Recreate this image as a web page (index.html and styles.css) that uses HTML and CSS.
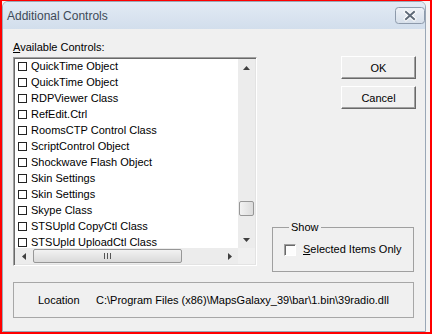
FILE: index.html
```html
<!DOCTYPE html>
<html lang="en">
<head>
    <meta charset="UTF-8">
    <meta name="viewport" content="width=device-width, initial-scale=1.0">
    <title>Additional Controls</title>
    <link rel="stylesheet" href="styles.css">
</head>
<body>
    <div class="shot">
        <div class="window">
            <div class="titlebar">
                <span class="title">Additional Controls</span>
                <span class="close">
                    <svg width="30" height="17" viewBox="0 0 30 17">
                        <defs>
                            <linearGradient id="cg" x1="0" y1="0" x2="0" y2="1">
                                <stop offset="0" stop-color="#eef2f7"/>
                                <stop offset="1" stop-color="#d6dfea"/>
                            </linearGradient>
                        </defs>
                        <rect x="0.5" y="0.5" width="29" height="16" rx="3" fill="url(#cg)" stroke="#8d9aab"/>
                        <path d="M11 5 L19 12 M19 5 L11 12" stroke="#ffffff" stroke-width="4" stroke-linecap="square"/>
                        <path d="M11 5 L19 12 M19 5 L11 12" stroke="#5f6b79" stroke-width="2" stroke-linecap="square"/>
                    </svg>
                </span>
            </div>
            <div class="client">
                <div class="top">
                    <div class="left">
                        <div class="label"><u>A</u>vailable Controls:</div>
                        <div class="listbox">
                            <div class="list-main">
                                <ul class="items">
                                    <li><span class="cb"></span>QuickTime Object</li>
                                    <li><span class="cb"></span>QuickTime Object</li>
                                    <li><span class="cb"></span>RDPViewer Class</li>
                                    <li><span class="cb"></span>RefEdit.Ctrl</li>
                                    <li><span class="cb"></span>RoomsCTP Control Class</li>
                                    <li><span class="cb"></span>ScriptControl Object</li>
                                    <li><span class="cb"></span>Shockwave Flash Object</li>
                                    <li><span class="cb"></span>Skin Settings</li>
                                    <li><span class="cb"></span>Skin Settings</li>
                                    <li><span class="cb"></span>Skype Class</li>
                                    <li><span class="cb"></span>STSUpld CopyCtl Class</li>
                                    <li><span class="cb"></span>STSUpld UploadCtl Class</li>
                                </ul>
                                <div class="vscroll">
                                    <div class="arrow">
                                        <svg width="7" height="4" viewBox="0 0 7 4"><path d="M0 4 L3.5 0 L7 4 Z" fill="#3f3f3f"/></svg>
                                    </div>
                                    <div class="vtrack"><div class="vthumb"></div></div>
                                    <div class="arrow">
                                        <svg width="7" height="4" viewBox="0 0 7 4"><path d="M0 0 L3.5 4 L7 0 Z" fill="#3f3f3f"/></svg>
                                    </div>
                                </div>
                            </div>
                            <div class="hrow">
                                <div class="hscroll">
                                    <div class="arrow">
                                        <svg width="4" height="7" viewBox="0 0 4 7"><path d="M4 0 L0 3.5 L4 7 Z" fill="#3f3f3f"/></svg>
                                    </div>
                                    <div class="htrack">
                                        <div class="hthumb"><span class="grip"></span><span class="grip"></span><span class="grip"></span></div>
                                    </div>
                                    <div class="arrow">
                                        <svg width="4" height="7" viewBox="0 0 4 7"><path d="M0 0 L4 3.5 L0 7 Z" fill="#3f3f3f"/></svg>
                                    </div>
                                </div>
                                <div class="corner"></div>
                            </div>
                        </div>
                    </div>
                    <div class="right">
                        <button class="btn">OK</button>
                        <button class="btn">Cancel</button>
                        <fieldset class="group">
                            <legend>Show</legend>
                            <label class="check"><span class="box"></span><span><u>S</u>elected Items Only</span></label>
                        </fieldset>
                    </div>
                </div>
                <div class="location">
                    <span class="loc-label">Location</span>
                    <span>C:\Program Files (x86)\MapsGalaxy_39\bar\1.bin\39radio.dll</span>
                </div>
            </div>
        </div>
    </div>
</body>
</html>
```

FILE: styles.css
```css
html {
    font-family: 'Liberation Sans', Arial, sans-serif;
    font-size: 11px;
}
body {
    margin: 0;
    background: #f4f4f4;
}
.shot {
    width: 432px;
    height: 334px;
    box-sizing: border-box;
    border: 2px solid #ff0000;
    border-top-width: 1px;
    background: #f4f4f4;
}
.window {
    width: 424px;
    height: 331px;
    box-sizing: border-box;
    border: 1px solid #9aa7b6;
    border-radius: 6px 6px 0 0;
    background: #f0f0f0;
    overflow: hidden;
}
.titlebar {
    height: 27px;
    display: flex;
    align-items: flex-start;
    justify-content: space-between;
    padding-left: 4px;
    background: linear-gradient(#e2eaf4, #d2deec);
}
.title {
    font-size: 12px;
    color: #3e4a58;
    line-height: 14px;
    margin-top: 7px;
}
.close {
    display: block;
    margin-top: 5px;
    height: 17px;
}
.close svg {
    display: block;
}
.client {
    padding: 12px 0 0 10px;
}
.top {
    display: flex;
    gap: 15px;
    align-items: flex-start;
}
.left {
    width: 244px;
}
.label {
    line-height: 13px;
    margin-bottom: 3px;
}
.listbox {
    height: 209px;
    box-sizing: border-box;
    border: 1px solid;
    border-color: #a0a0a0 #ffffff #ffffff #a0a0a0;
    box-shadow: inset 1px 1px #696969, inset -1px -1px #e3e3e3;
    padding: 1px;
    display: flex;
    flex-direction: column;
}
.list-main {
    display: flex;
    height: 189px;
}
.items {
    flex: 1;
    margin: 0;
    padding: 0 0 0 3px;
    list-style: none;
    background: #ffffff;
    overflow: hidden;
}
.items li {
    height: 16px;
    line-height: 16px;
    display: flex;
    align-items: center;
    white-space: nowrap;
}
.items li:first-child {
    margin-top: -1px;
}
.cb {
    width: 9px;
    height: 9px;
    box-sizing: border-box;
    border: 1px solid #222;
    margin-right: 4px;
    background: #fff;
}
.vscroll {
    width: 17px;
    display: flex;
    flex-direction: column;
    background: #ececec;
}
.arrow {
    width: 17px;
    height: 17px;
    display: flex;
    align-items: center;
    justify-content: center;
}
.arrow svg {
    display: block;
}
.vtrack {
    flex: 1;
}
.vthumb {
    margin: 125px 0 0 1px;
    width: 15px;
    height: 15px;
    box-sizing: border-box;
    border: 1px solid #979797;
    border-radius: 2px;
    background: linear-gradient(90deg, #f2f2f2, #dcdcdc);
}
.hrow {
    display: flex;
    height: 16px;
}
.hscroll {
    flex: 1;
    display: flex;
    background: #ececec;
}
.hscroll .arrow {
    height: 16px;
}
.htrack {
    flex: 1;
}
.hthumb {
    margin: 1px 0 0 1px;
    width: 149px;
    height: 14px;
    box-sizing: border-box;
    border: 1px solid #979797;
    border-radius: 2px;
    background: linear-gradient(#f2f2f2, #dadada);
    display: flex;
    justify-content: center;
    align-items: center;
    gap: 2px;
}
.grip {
    width: 1px;
    height: 6px;
    background: #555;
}
.corner {
    width: 17px;
    background: #f0f0f0;
}
.right {
    width: 144px;
    height: 216px;
    margin-top: 15px;
    display: flex;
    flex-direction: column;
    align-items: flex-end;
}
.btn {
    width: 75px;
    height: 23px;
    margin: 0 0 7px 0;
    padding: 0;
    font: inherit;
    color: #000;
    background: #f0f0f0;
    border: 1px solid;
    border-color: #ffffff #696969 #696969 #ffffff;
    box-shadow: inset -1px -1px #a0a0a0;
}
.group {
    align-self: flex-start;
    margin: auto 0 0 0;
    width: 142px;
    box-sizing: border-box;
    border: 1px solid #a0a0a0;
    padding: 9px 0 15px 11px;
}
.group legend {
    padding: 0 2px;
    margin-left: 5px;
    line-height: 13px;
}
.check {
    display: flex;
    align-items: center;
    gap: 7px;
    line-height: 13px;
}
.box {
    width: 12px;
    height: 12px;
    box-sizing: border-box;
    border: 1px solid;
    border-color: #a0a0a0 #ffffff #ffffff #a0a0a0;
    box-shadow: inset 1px 1px #696969;
    background: #fdfdfd;
}
.location {
    margin-top: 10px;
    width: 401px;
    height: 36px;
    box-sizing: border-box;
    border: 1px solid #a7a7a7;
    display: flex;
    align-items: center;
    padding-left: 24px;
}
.loc-label {
    width: 58px;
}
```
